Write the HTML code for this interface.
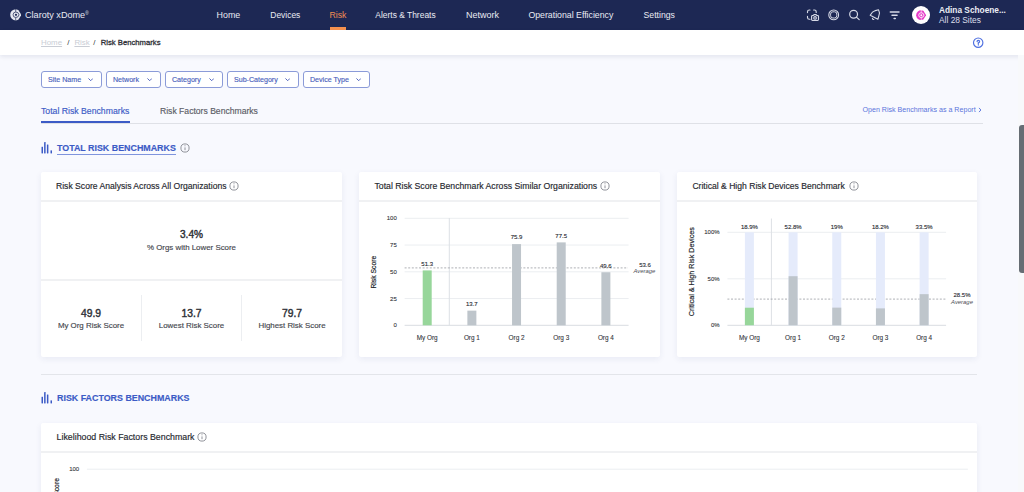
<!DOCTYPE html>
<html><head><meta charset="utf-8">
<style>
*{margin:0;padding:0;box-sizing:border-box}
html,body{width:1024px;height:492px;overflow:hidden}
body{font-family:"Liberation Sans",sans-serif;background:#f8f9fe;position:relative;color:#2a2c33}
.a{position:absolute;white-space:nowrap}
.ts,.btn,.ctitle,.lab{-webkit-text-stroke:.15px currentColor}
.nt{position:absolute;top:9px;font-size:8.5px;color:#e9ebf3;line-height:12px;white-space:nowrap}
.btn{position:absolute;top:71px;height:17px;border:1px solid #8b9bd8;border-radius:3px;background:#fff;font-size:7.1px;color:#4a5fbc;line-height:16.4px;padding-left:6px;white-space:nowrap}
.btn svg{position:absolute;top:6.2px;right:7.9px}
.card{position:absolute;background:#fff;border-radius:2px;box-shadow:0 2px 6px rgba(40,50,120,.075)}
.ctitle{position:absolute;left:15px;top:8px;font-size:8.6px;line-height:12px;color:#25272e;white-space:nowrap}
.cdiv{position:absolute;left:0;right:0;top:28px;height:2px;background:#f0f1f3}
.big{position:absolute;text-align:center;font-size:10.1px;-webkit-text-stroke:.4px #2e3036;line-height:12px;color:#2e3036}
.lab{position:absolute;text-align:center;font-size:7.9px;line-height:10px;color:#45474e;white-space:nowrap}
.yl{font-size:6px;fill:#34363c;stroke:#34363c;stroke-width:.1px;font-family:"Liberation Sans",sans-serif}
.xl{font-size:6.4px;fill:#34363c;stroke:#34363c;stroke-width:.1px;font-family:"Liberation Sans",sans-serif}
.vl{font-size:6px;fill:#2a2c33;stroke:#2a2c33;stroke-width:.12px;font-family:"Liberation Sans",sans-serif}
.av{font-size:5.9px;font-style:italic;fill:#4a4c54;font-family:"Liberation Sans",sans-serif}
.ax{font-size:6.8px;fill:#26282e;stroke:#26282e;stroke-width:.2px;font-family:"Liberation Sans",sans-serif}
</style></head><body>
<div class="a" style="left:0;top:0;width:1024px;height:29.5px;background:#1d2854"></div>
<svg class="a" style="left:9.7px;top:9.1px" width="11.6" height="11.6" viewBox="0 0 12 12"><path d="M6 .2A5.8 5.8 0 0 0 6 11.8L8.6 11L11.8 6L8.6 1Z" fill="#e4e7f0"/><path d="M6 3.2A2.8 2.8 0 0 0 6 8.8M6 3.2L8.3 3.9L9.3 6L8.3 8.1L6 8.8" fill="none" stroke="#1d2854" stroke-width="0.75"/><circle cx="6.2" cy="6" r="1.15" fill="#1d2854"/><rect x="5.65" y="0" width=".7" height="3" fill="#1d2854"/><rect x="5.65" y="9" width=".7" height="3" fill="#1d2854"/></svg>
<div class="nt" style="left:25px;font-size:9.1px">Claroty xDome<sup style="font-size:4.6px;vertical-align:top;position:relative;top:-1px">&#174;</sup></div>
<div class="nt" style="left:216.6px;font-size:8.9px">Home</div>
<div class="nt" style="left:270.3px;font-size:8.45px">Devices</div>
<div class="nt" style="left:329.4px;font-size:8.75px;color:#f08d52">Risk</div>
<div class="nt" style="left:375.3px;font-size:8.45px">Alerts &amp; Threats</div>
<div class="nt" style="left:465.9px;font-size:9.0px">Network</div>
<div class="nt" style="left:528.4px;font-size:8.75px">Operational Efficiency</div>
<div class="nt" style="left:643.5px;font-size:8.7px">Settings</div>
<div class="a" style="left:329.7px;top:27px;width:16.3px;height:2.5px;background:#f5914f"></div>
<svg class="a" style="left:804px;top:6px" width="20" height="18" viewBox="804 6 20 18" fill="none" stroke="#d6d9e6" stroke-width="1.15" stroke-linecap="round">
<path d="M807.5 12.6V11.8A1.8 1.8 0 0 1 809.3 10H810"/><path d="M813.6 10H814.4A1.8 1.8 0 0 1 816.2 11.8V12.4"/><path d="M807.5 16.4V17.4A1.8 1.8 0 0 0 809.3 19.2H810"/>
<path d="M811.6 16.4Q811.6 15.5 812.5 15.5H813.3L814 14.6H816.1L816.8 15.5H817.6Q818.5 15.5 818.5 16.4V19.6Q818.5 20.5 817.6 20.5H812.5Q811.6 20.5 811.6 19.6Z" stroke-linejoin="round"/><circle cx="815.05" cy="17.9" r="1.3"/>
</svg>
<svg class="a" style="left:826px;top:7px" width="16" height="16" viewBox="826 7 16 16" fill="none" stroke="#d6d9e6" stroke-width="1.1">
<circle cx="833.7" cy="14.9" r="4.9"/><rect x="830.6" y="11.8" width="6.2" height="6.2" rx="2.3" stroke-width="1"/>
</svg>
<svg class="a" style="left:847px;top:8px" width="14" height="14" viewBox="847 8 14 14" fill="none" stroke="#d6d9e6" stroke-width="1.2" stroke-linecap="round">
<circle cx="853.6" cy="14.3" r="3.9"/><path d="M856.4 17.1L859.2 19.6"/>
</svg>
<svg class="a" style="left:867px;top:8px" width="15" height="14" viewBox="867 8 15 14" fill="none" stroke="#d6d9e6" stroke-width="1.1" stroke-linejoin="round" stroke-linecap="round">
<path d="M870.2 15.3Q872.2 11.6 875.4 10.6L878.5 9.8Q880.1 12.6 878.9 15.6L877.9 19.3Z"/><path d="M872.4 18.3Q872.6 19.6 873.8 19.5"/>
</svg>
<svg class="a" style="left:888px;top:10px" width="13" height="10" viewBox="888 10 13 10" stroke="#d6d9e6" stroke-width="1.45" stroke-linecap="round">
<path d="M890.3 11.9H899M892 15.2H897.1M894.1 18.4H895.3"/>
</svg>
<div class="a" style="left:912px;top:5.9px;width:18px;height:18px;border-radius:50%;background:#fff"></div>
<svg class="a" style="left:915.8px;top:9.8px" width="10.3" height="10.3" viewBox="0 0 12 12"><path d="M6 .2A5.8 5.8 0 0 0 6 11.8L8.6 11L11.8 6L8.6 1Z" fill="#e63bc9"/><path d="M6 3.2A2.8 2.8 0 0 0 6 8.8M6 3.2L8.3 3.9L9.3 6L8.3 8.1L6 8.8" fill="none" stroke="#fff" stroke-width="1.0"/><circle cx="6.2" cy="6" r="1.15" fill="#fff"/><rect x="5.65" y="0" width=".7" height="3" fill="#fff"/><rect x="5.65" y="9" width=".7" height="3" fill="#fff"/></svg>
<div class="a" style="left:939px;top:4px;font-size:8.3px;font-weight:bold;color:#eceef5;line-height:12px">Adina Schoene...</div>
<div class="a" style="left:939px;top:14px;font-size:8.4px;color:#dcdfea;line-height:12px">All 28 Sites</div>
<div class="a" style="left:0;top:29.5px;width:1024px;height:25px;background:#fff;box-shadow:0 1.5px 4px rgba(20,30,80,.085)"></div>
<div class="a" style="left:41px;top:36.9px;font-size:7.9px;color:#c9cdd5;text-decoration:underline;line-height:11px">Home</div>
<div class="a" style="left:67.2px;top:36.9px;font-size:7.9px;color:#3a3a3f;line-height:11px">/</div>
<div class="a" style="left:74.4px;top:36.9px;font-size:7.9px;color:#c9cdd5;text-decoration:underline;line-height:11px">Risk</div>
<div class="a" style="left:93.2px;top:36.9px;font-size:7.9px;color:#3a3a3f;line-height:11px">/</div>
<div class="a" style="left:100.7px;top:36.9px;font-size:7.7px;-webkit-text-stroke:.3px #2e3036;color:#2e3036;line-height:11px">Risk Benchmarks</div>
<svg class="a" style="left:972px;top:37px" width="12" height="12" viewBox="972 37 12 12" fill="none" stroke="#4f70e0" stroke-width="1.15">
<circle cx="978.2" cy="42.7" r="4.7"/><path d="M977.1 41.5Q977.1 40.3 978.3 40.3Q979.6 40.3 979.6 41.5Q979.6 42.4 978.3 42.9V44.3" stroke-width="1.25" stroke-linecap="round"/><circle cx="978.3" cy="45.3" r=".25" stroke-width=".6"/>
</svg>
<div class="btn" style="left:41px;width:61px">Site Name<svg width="5.4" height="3.6" viewBox="0 0 6 4"><path d="M.8 .8L3 3L5.2 .8" fill="none" stroke="#4a5fbc" stroke-width="1.05" stroke-linecap="round" stroke-linejoin="round"/></svg></div>
<div class="btn" style="left:106px;width:55px">Network<svg width="5.4" height="3.6" viewBox="0 0 6 4"><path d="M.8 .8L3 3L5.2 .8" fill="none" stroke="#4a5fbc" stroke-width="1.05" stroke-linecap="round" stroke-linejoin="round"/></svg></div>
<div class="btn" style="left:165px;width:58px">Category<svg width="5.4" height="3.6" viewBox="0 0 6 4"><path d="M.8 .8L3 3L5.2 .8" fill="none" stroke="#4a5fbc" stroke-width="1.05" stroke-linecap="round" stroke-linejoin="round"/></svg></div>
<div class="btn" style="left:227px;width:72px">Sub-Category<svg width="5.4" height="3.6" viewBox="0 0 6 4"><path d="M.8 .8L3 3L5.2 .8" fill="none" stroke="#4a5fbc" stroke-width="1.05" stroke-linecap="round" stroke-linejoin="round"/></svg></div>
<div class="btn" style="left:303px;width:67px">Device Type<svg width="5.4" height="3.6" viewBox="0 0 6 4"><path d="M.8 .8L3 3L5.2 .8" fill="none" stroke="#4a5fbc" stroke-width="1.05" stroke-linecap="round" stroke-linejoin="round"/></svg></div>
<div class="a ts" style="left:41px;top:105px;font-size:8.7px;color:#3c5bc6;line-height:12px">Total Risk Benchmarks</div>
<div class="a ts" style="left:160px;top:105px;font-size:8.6px;color:#5b5d66;line-height:12px">Risk Factors Benchmarks</div>
<div class="a" style="left:862.5px;top:104.5px;font-size:7.1px;color:#5b74dc;line-height:10px">Open Risk Benchmarks as a Report</div>
<svg class="a" style="left:978px;top:107px" width="4" height="6" viewBox="0 0 4 6"><path d="M1 .9L2.9 3L1 5.1" fill="none" stroke="#5b74dc" stroke-width=".95"/></svg>
<div class="a" style="left:41px;top:123px;width:942px;height:1px;background:#dfe1e7"></div>
<div class="a" style="left:41px;top:121px;width:89px;height:2px;background:#3c5bc6"></div>
<svg class="a" style="left:41px;top:142px" width="12" height="12" viewBox="0 0 12 12" fill="#3c5bc6"><rect x=".5" y="4.7" width="1.5" height="6.7" rx=".4"/><rect x="3.1" y="0" width="1.5" height="11.4" rx=".4"/><rect x="5.9" y="2.4" width="1.5" height="9" rx=".4"/><rect x="9.5" y="8.3" width="1.5" height="3.1" rx=".4"/></svg>
<div class="a" style="left:57px;top:142.5px;font-size:8.9px;font-weight:bold;color:#3c5bc6;-webkit-text-stroke:.15px #3c5bc6;line-height:11px">TOTAL RISK BENCHMARKS</div>
<div class="a" style="left:57px;top:153.7px;width:119px;height:1px;background:#7f94dd"></div>
<svg class="a" style="left:179.8px;top:142.8px" width="10" height="10" viewBox="0 0 10 10" fill="none" stroke="#84878f" stroke-width=".9"><circle cx="5" cy="5" r="4.1"/><path d="M5 4.4V7.2"/><circle cx="5" cy="2.9" r=".2" stroke-width=".8"/></svg>
<svg class="a" style="left:41px;top:392px" width="12" height="12" viewBox="0 0 12 12" fill="#3c5bc6"><rect x=".5" y="4.7" width="1.5" height="6.7" rx=".4"/><rect x="3.1" y="0" width="1.5" height="11.4" rx=".4"/><rect x="5.9" y="2.4" width="1.5" height="9" rx=".4"/><rect x="9.5" y="8.3" width="1.5" height="3.1" rx=".4"/></svg>
<div class="a" style="left:57px;top:392.8px;font-size:8.9px;font-weight:bold;color:#3c5bc6;-webkit-text-stroke:.15px #3c5bc6;line-height:11px">RISK FACTORS BENCHMARKS</div>
<div class="a" style="left:41px;top:374px;width:936px;height:1px;background:#e3e5ea"></div>
<div class="card" style="left:41px;top:172px;width:301px;height:185px"></div>
<div class="card" style="left:359px;top:172px;width:301px;height:185px"></div>
<div class="card" style="left:677px;top:172px;width:300px;height:185px"></div>
<div class="card" style="left:41px;top:422.5px;width:936px;height:100px"></div>
<div class="a" style="left:41px;top:200px;width:301px;height:2px;background:#f0f1f3"></div>
<div class="a" style="left:359px;top:200px;width:301px;height:2px;background:#f0f1f3"></div>
<div class="a" style="left:677px;top:200px;width:300px;height:2px;background:#f0f1f3"></div>
<div class="a" style="left:41px;top:450.5px;width:936px;height:2px;background:#f0f1f3"></div>
<div class="a" style="left:41px;top:278.5px;width:301px;height:2px;background:#f0f1f3"></div>
<div class="ctitle" style="left:56px;top:180px">Risk Score Analysis Across All Organizations</div>
<svg class="a" style="left:229px;top:181.2px" width="10" height="10" viewBox="0 0 10 10" fill="none" stroke="#84878f" stroke-width=".9"><circle cx="5" cy="5" r="4.1"/><path d="M5 4.4V7.2"/><circle cx="5" cy="2.9" r=".2" stroke-width=".8"/></svg>
<div class="ctitle" style="left:374.5px;top:180px;font-size:8.7px">Total Risk Score Benchmark Across Similar Organizations</div>
<svg class="a" style="left:599.6px;top:181.2px" width="10" height="10" viewBox="0 0 10 10" fill="none" stroke="#84878f" stroke-width=".9"><circle cx="5" cy="5" r="4.1"/><path d="M5 4.4V7.2"/><circle cx="5" cy="2.9" r=".2" stroke-width=".8"/></svg>
<div class="ctitle" style="left:692.4px;top:180px">Critical &amp; High Risk Devices Benchmark</div>
<svg class="a" style="left:848.9px;top:181.2px" width="10" height="10" viewBox="0 0 10 10" fill="none" stroke="#84878f" stroke-width=".9"><circle cx="5" cy="5" r="4.1"/><path d="M5 4.4V7.2"/><circle cx="5" cy="2.9" r=".2" stroke-width=".8"/></svg>
<div class="ctitle" style="left:56.6px;top:431px;font-size:8.8px">Likelihood Risk Factors Benchmark</div>
<svg class="a" style="left:196.9px;top:432px" width="10" height="10" viewBox="0 0 10 10" fill="none" stroke="#84878f" stroke-width=".9"><circle cx="5" cy="5" r="4.1"/><path d="M5 4.4V7.2"/><circle cx="5" cy="2.9" r=".2" stroke-width=".8"/></svg>
<div class="big" style="left:41px;width:301px;top:228.6px">3.4%</div>
<div class="lab" style="left:41px;width:301px;top:243px">% Orgs with Lower Score</div>
<div class="a" style="left:140.5px;top:295px;width:1px;height:46px;background:#eceef1"></div>
<div class="a" style="left:241px;top:295px;width:1px;height:46px;background:#eceef1"></div>
<div class="big" style="left:41px;width:100px;top:307.8px;font-size:10.3px">49.9</div>
<div class="lab" style="left:41px;width:100px;top:320.5px">My Org Risk Score</div>
<div class="big" style="left:141.5px;width:100px;top:307.8px;font-size:10.3px">13.7</div>
<div class="lab" style="left:141.5px;width:100px;top:320.5px">Lowest Risk Score</div>
<div class="big" style="left:242px;width:100px;top:307.8px;font-size:10.3px">79.7</div>
<div class="lab" style="left:242px;width:100px;top:320.5px">Highest Risk Score</div>
<div class="a" style="left:1018px;top:55px;width:6px;height:437px;background:#f8f9fb"></div>
<div class="a" style="left:1019px;top:125px;width:7px;height:148px;border-radius:3px;background:#666d74"></div>
<svg class="a" style="left:0;top:0" width="1024" height="492" viewBox="0 0 1024 492">
<rect x="404.6" y="217.8" width="224" height="1" fill="#eceef1"/>
<text x="396.8" y="220.4" text-anchor="end" class="yl">100</text>
<rect x="404.6" y="244.55" width="224" height="1" fill="#eceef1"/>
<text x="396.8" y="247.15" text-anchor="end" class="yl">75</text>
<rect x="404.6" y="271.3" width="224" height="1" fill="#eceef1"/>
<text x="396.8" y="273.9" text-anchor="end" class="yl">50</text>
<rect x="404.6" y="298.05" width="224" height="1" fill="#eceef1"/>
<text x="396.8" y="300.65" text-anchor="end" class="yl">25</text>
<rect x="404.6" y="324.8" width="224" height="1" fill="#d9dde2"/>
<text x="396.8" y="327.4" text-anchor="end" class="yl">0</text>
<rect x="448.8" y="218" width="1" height="107.3" fill="#dde0e5"/>
<line x1="404.6" y1="267.9" x2="628" y2="267.9" stroke="#8c8f96" stroke-width=".7" stroke-dasharray="2 1.6"/>
<rect x="422.7" y="270.41" width="9" height="54.89" fill="#97d69a"/>
<rect x="467.37" y="310.64" width="9" height="14.66" fill="#bec5cb"/>
<rect x="512.04" y="244.09" width="9" height="81.21" fill="#bec5cb"/>
<rect x="556.71" y="242.38" width="9" height="82.93" fill="#bec5cb"/>
<rect x="601.38" y="272.23" width="9" height="53.07" fill="#bec5cb"/>
<text x="427.2" y="265.81" text-anchor="middle" class="vl">51.3</text>
<text x="427.2" y="340.1" text-anchor="middle" class="xl">My Org</text>
<text x="471.87" y="306.04" text-anchor="middle" class="vl">13.7</text>
<text x="471.87" y="340.1" text-anchor="middle" class="xl">Org 1</text>
<text x="516.54" y="239.49" text-anchor="middle" class="vl">75.9</text>
<text x="516.54" y="340.1" text-anchor="middle" class="xl">Org 2</text>
<text x="561.21" y="237.78" text-anchor="middle" class="vl">77.5</text>
<text x="561.21" y="340.1" text-anchor="middle" class="xl">Org 3</text>
<text x="605.88" y="267.63" text-anchor="middle" class="vl">49.6</text>
<text x="605.88" y="340.1" text-anchor="middle" class="xl">Org 4</text>
<text x="645" y="267" text-anchor="middle" class="vl">53.6</text>
<text x="644.4" y="273.3" text-anchor="middle" class="av">Average</text>
<text transform="translate(375.6 272.2) rotate(-90)" text-anchor="middle" class="ax">Risk Score</text>
<rect x="727.4" y="231.8" width="218.7" height="1" fill="#eceef1"/>
<text x="719.6" y="234.4" text-anchor="end" class="yl">100%</text>
<rect x="727.4" y="278.3" width="218.7" height="1" fill="#eceef1"/>
<text x="719.6" y="280.9" text-anchor="end" class="yl">50%</text>
<rect x="727.4" y="324.8" width="218.7" height="1" fill="#d9dde2"/>
<text x="719.6" y="327.4" text-anchor="end" class="yl">0%</text>
<rect x="770.9" y="218.5" width="1" height="106.8" fill="#dde0e5"/>
<line x1="727.4" y1="299.1" x2="946.1" y2="299.1" stroke="#8c8f96" stroke-width=".7" stroke-dasharray="2 1.6"/>
<rect x="744.9" y="232.3" width="9" height="93" fill="#e5ebfb"/>
<rect x="744.9" y="307.72" width="9" height="17.58" fill="#97d69a"/>
<text x="749.4" y="228.6" text-anchor="middle" class="vl">18.9%</text>
<text x="749.4" y="340.1" text-anchor="middle" class="xl">My Org</text>
<rect x="788.58" y="232.3" width="9" height="93" fill="#e5ebfb"/>
<rect x="788.58" y="276.2" width="9" height="49.1" fill="#bec5cb"/>
<text x="793.08" y="228.6" text-anchor="middle" class="vl">52.8%</text>
<text x="793.08" y="340.1" text-anchor="middle" class="xl">Org 1</text>
<rect x="832.26" y="232.3" width="9" height="93" fill="#e5ebfb"/>
<rect x="832.26" y="307.63" width="9" height="17.67" fill="#bec5cb"/>
<text x="836.76" y="228.6" text-anchor="middle" class="vl">19%</text>
<text x="836.76" y="340.1" text-anchor="middle" class="xl">Org 2</text>
<rect x="875.94" y="232.3" width="9" height="93" fill="#e5ebfb"/>
<rect x="875.94" y="308.37" width="9" height="16.93" fill="#bec5cb"/>
<text x="880.44" y="228.6" text-anchor="middle" class="vl">18.2%</text>
<text x="880.44" y="340.1" text-anchor="middle" class="xl">Org 3</text>
<rect x="919.62" y="232.3" width="9" height="93" fill="#e5ebfb"/>
<rect x="919.62" y="294.14" width="9" height="31.16" fill="#bec5cb"/>
<text x="924.12" y="228.6" text-anchor="middle" class="vl">33.5%</text>
<text x="924.12" y="340.1" text-anchor="middle" class="xl">Org 4</text>
<text x="962" y="297.2" text-anchor="middle" class="vl">28.5%</text>
<text x="962" y="303.7" text-anchor="middle" class="av">Average</text>
<text transform="translate(693.6 271.7) rotate(-90)" text-anchor="middle" class="ax" style="font-size:7.2px">Critical &amp; High Risk Devices</text>
<rect x="86.9" y="468.7" width="881" height="1" fill="#eceef1"/>
<text x="79.2" y="471.3" text-anchor="end" class="yl">100</text>
<text transform="translate(58.9 494.5) rotate(-90)" text-anchor="middle" class="ax">Risk Score</text>
</svg>
</body></html>
